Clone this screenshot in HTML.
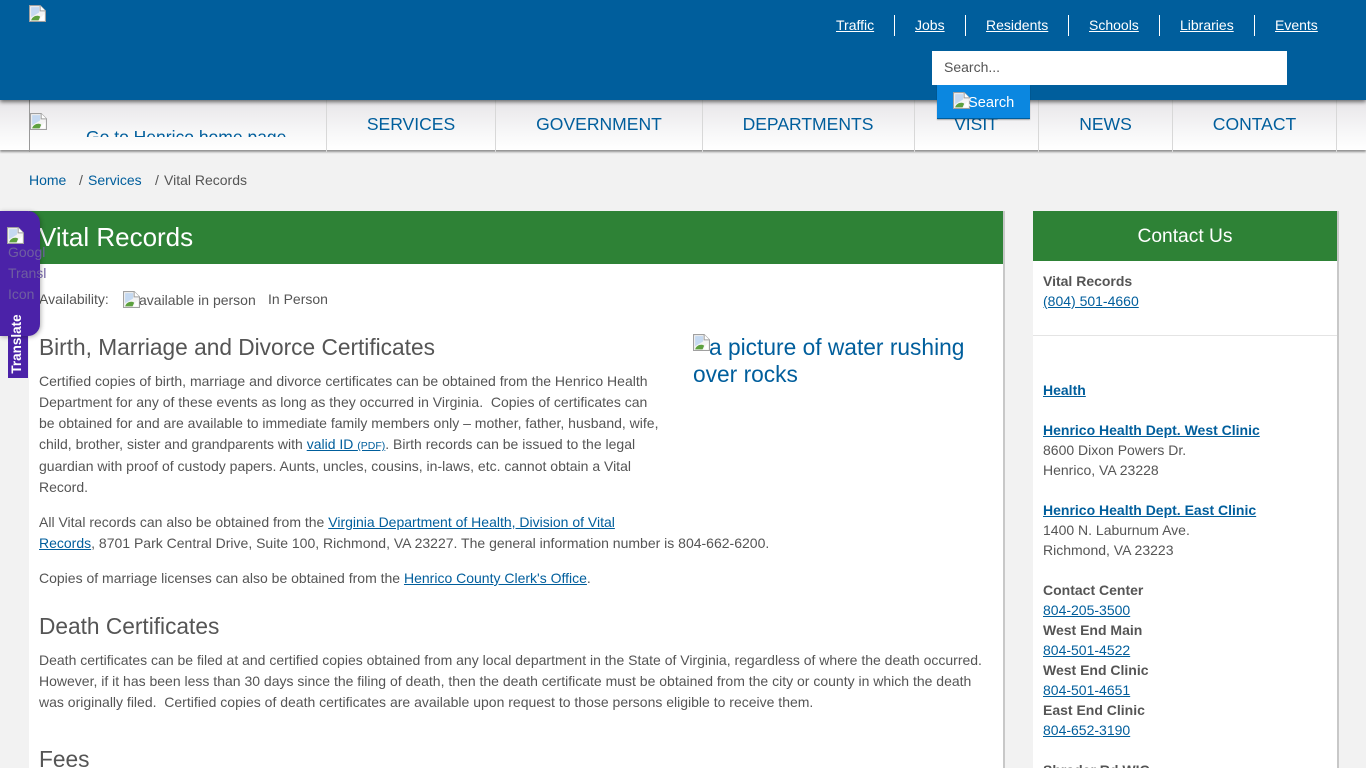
<!DOCTYPE html>
<html lang="en"><head><meta charset="utf-8"><title>Vital Records</title>
<style>
html,body{margin:0;padding:0;width:1366px;height:768px;overflow:hidden;background:#f2f2f2;font-family:"Liberation Sans",sans-serif;font-size:14px;color:#555}
#w{position:relative;width:1366px;height:768px;overflow:hidden}
a{color:#005e9c}
.t{position:absolute;white-space:nowrap;line-height:20px}
.b{font-weight:bold}
.h{position:absolute;white-space:nowrap;font-size:22.7px;line-height:30px;color:#555}
.top a{position:absolute;top:15px;line-height:20px;color:#fff;white-space:nowrap}
.sep{position:absolute;top:15px;width:1px;height:21px;background:#fff}
.nav{position:absolute;top:114px;line-height:20px;font-size:17.55px;color:#005e9c;white-space:nowrap;transform:translateX(-50%)}
.div{position:absolute;top:100px;height:52px;width:1px;background:#d8d8d8}
.ic{position:absolute;width:17px;height:17px}
</style></head><body><div id="w">
<svg width="0" height="0" style="position:absolute"><defs><symbol id="br" viewBox="0 0 16 16">
<path d="M.5 .5H10.500L15.500 5.500V15.500H.5Z" fill="#f4f4f4" stroke="#a0a0a0"/><path d="M10.500 .5V5.500H15.500" fill="#fff" stroke="#a0a0a0"/>
<path d="M2 2H9.500V7L2 11.500Z" fill="#c5d9f1"/><path d="M2 14.500C3 10.500 8 9 10.500 11L9 14.500Z" fill="#5da13f"/><path d="M11 12L14.500 8.500V14.500H10Z" fill="#fff"/>
</symbol></defs></svg>

<div style="position:absolute;left:0;top:0;width:1366px;height:100px;background:#005e9c;box-shadow:0 2px 4px rgba(0,0,0,.55);z-index:3"></div>
<div style="position:absolute;left:0;top:100px;width:1366px;height:50px;background:linear-gradient(#e7e5e8,#f6f6f7 60%,#fff);box-shadow:0 2px 2px rgba(0,0,0,.4);z-index:1"></div>
<div style="z-index:2;position:absolute;left:0;top:0;width:1366px;height:160px">
<div class="div" style="left:29px;background:#999"></div><div class="div" style="left:326px"></div><div class="div" style="left:495px"></div><div class="div" style="left:702px"></div><div class="div" style="left:914px"></div><div class="div" style="left:1038px"></div><div class="div" style="left:1172px"></div><div class="div" style="left:1336px"></div>
<svg class="ic" style="left:30px;top:113px"><use href="#br"/></svg>
<div style="position:absolute;left:86px;top:114px;height:23px;width:220px;overflow:hidden"><span style="position:absolute;left:0;top:13px;font-size:17.5px;line-height:20px;color:#005e9c;white-space:nowrap">Go to Henrico home page</span></div>
<span class="nav" style="left:411px">SERVICES</span><span class="nav" style="left:599px">GOVERNMENT</span><span class="nav" style="left:808px">DEPARTMENTS</span><span class="nav" style="left:976px">VISIT</span><span class="nav" style="left:1105.500px">NEWS</span><span class="nav" style="left:1254.500px">CONTACT</span>
</div>
<div class="top" style="position:absolute;left:0;top:0;width:1366px;height:100px;z-index:4">
<svg class="ic" style="left:29px;top:5px"><use href="#br"/></svg>
<a href="#" style="left:836px">Traffic</a><i class="sep" style="left:894px"></i>
<a href="#" style="left:915px">Jobs</a><i class="sep" style="left:965px"></i>
<a href="#" style="left:986px">Residents</a><i class="sep" style="left:1068px"></i>
<a href="#" style="left:1089px">Schools</a><i class="sep" style="left:1159px"></i>
<a href="#" style="left:1180px">Libraries</a><i class="sep" style="left:1254px"></i>
<a href="#" style="left:1275px">Events</a>
<div style="position:absolute;left:932px;top:51px;width:355px;height:34px;background:#fff;line-height:33px;text-indent:12px;color:#555">Search...</div>
</div>
<div style="position:absolute;left:937px;top:85px;width:93px;height:34px;background:#0b87e0;border-bottom:1px solid #005e9c;box-sizing:border-box;z-index:5;box-shadow:0 1px 1px rgba(0,0,0,.3)">
<svg class="ic" style="left:16px;top:7px"><use href="#br"/></svg><span style="position:absolute;left:31px;top:8px;line-height:20px;font-size:14.600px;color:#fff">Search</span></div>

<a class="t" href="#" style="left:29px;top:170px;text-decoration:none">Home</a>
<span class="t" style="left:79px;top:170px">/</span>
<a class="t" href="#" style="left:88px;top:170px;text-decoration:none">Services</a>
<span class="t" style="left:155px;top:170px">/</span>
<span class="t" style="left:164px;top:170px">Vital Records</span>

<div style="position:absolute;left:29px;top:211px;width:974px;height:557px;background:#fff;border-right:2px solid #c8c8c8"></div>
<div style="position:absolute;left:29px;top:211px;width:974px;height:53px;background:#2e8236"></div>
<div class="h" style="left:39px;top:222px;color:#fff;font-size:26px">Vital Records</div>
<span class="t" style="left:39px;top:289px">Availability:</span>
<svg class="ic" style="left:123px;top:291px"><use href="#br"/></svg>
<span class="t" style="left:139px;top:290px">available in person</span>
<span class="t" style="left:268px;top:289px">In Person</span>

<div class="h" style="left:39px;top:332px">Birth, Marriage and Divorce Certificates</div>
<svg class="ic" style="left:693px;top:334px"><use href="#br"/></svg>
<span class="t" style="left:709px;top:334px;font-size:22.75px;line-height:27px;color:#005e9c">a picture of water rushing</span>
<span class="t" style="left:693px;top:361px;font-size:22.75px;line-height:27px;color:#005e9c">over rocks</span>

<span class="t" style="left:39px;top:371px">Certified copies of birth, marriage and divorce certificates can be obtained from the Henrico Health</span>
<span class="t" style="left:39px;top:392px">Department for any of these events as long as they occurred in Virginia.&nbsp; Copies of certificates can</span>
<span class="t" style="left:39px;top:413px">be obtained for and are available to immediate family members only – mother, father, husband, wife,</span>
<span class="t" style="left:39px;top:434px">child, brother, sister and grandparents with <a href="#">valid ID <small style="font-size:10.500px">(PDF)</small></a>. Birth records can be issued to the legal</span>
<span class="t" style="left:39px;top:456px">guardian with proof of custody papers. Aunts, uncles, cousins, in-laws, etc. cannot obtain a Vital</span>
<span class="t" style="left:39px;top:477px">Record.</span>
<span class="t" style="left:39px;top:512px">All Vital records can also be obtained from the <a href="#">Virginia Department of Health, Division of Vital</a></span>
<span class="t" style="left:39px;top:533px"><a href="#">Records</a>, 8701 Park Central Drive, Suite 100, Richmond, VA 23227. The general information number is 804-662-6200.</span>
<span class="t" style="left:39px;top:568px">Copies of marriage licenses can also be obtained from the <a href="#">Henrico County Clerk's Office</a>.</span>
<div class="h" style="left:39px;top:611px">Death Certificates</div>
<span class="t" style="left:39px;top:650px">Death certificates can be filed at and certified copies obtained from any local department in the State of Virginia, regardless of where the death occurred.</span>
<span class="t" style="left:39px;top:671px">However, if it has been less than 30 days since the filing of death, then the death certificate must be obtained from the city or county in which the death</span>
<span class="t" style="left:39px;top:692px">was originally filed.&nbsp; Certified copies of death certificates are available upon request to those persons eligible to receive them.</span>
<div class="h" style="left:39px;top:744px">Fees</div>

<div style="position:absolute;left:1033px;top:211px;width:304px;height:557px;background:#fff;border-right:2px solid #c8c8c8"></div>
<div style="position:absolute;left:1033px;top:211px;width:304px;height:50px;background:#2e8236;color:#fff;font-size:19.200px;line-height:51px;text-align:center">Contact Us</div>
<div style="position:absolute;left:1033px;top:335px;width:304px;height:1px;background:#e4e4e4"></div>
<span class="t b" style="left:1043px;top:271px">Vital Records</span>
<a class="t" href="#" style="left:1043px;top:291px">(804) 501-4660</a>
<a class="t b" href="#" style="left:1043px;top:380px">Health</a>
<a class="t b" href="#" style="left:1043px;top:420px">Henrico Health Dept. West Clinic</a>
<span class="t" style="left:1043px;top:440px">8600 Dixon Powers Dr.</span>
<span class="t" style="left:1043px;top:460px">Henrico, VA 23228</span>
<a class="t b" href="#" style="left:1043px;top:500px">Henrico Health Dept. East Clinic</a>
<span class="t" style="left:1043px;top:520px">1400 N. Laburnum Ave.</span>
<span class="t" style="left:1043px;top:540px">Richmond, VA 23223</span>
<span class="t b" style="left:1043px;top:580px">Contact Center</span>
<a class="t" href="#" style="left:1043px;top:600px">804-205-3500</a>
<span class="t b" style="left:1043px;top:620px">West End Main</span>
<a class="t" href="#" style="left:1043px;top:640px">804-501-4522</a>
<span class="t b" style="left:1043px;top:660px">West End Clinic</span>
<a class="t" href="#" style="left:1043px;top:680px">804-501-4651</a>
<span class="t b" style="left:1043px;top:700px">East End Clinic</span>
<a class="t" href="#" style="left:1043px;top:720px">804-652-3190</a>
<span class="t b" style="left:1043px;top:760px">Shrader Rd WIC</span>

<div style="position:absolute;left:8px;top:300px;width:20px;height:78px;background:#4b22a8;z-index:6"></div>
<span style="position:absolute;z-index:8;left:17px;top:344px;transform:translate(-50%,-50%) rotate(-90deg);color:#fff;font-weight:bold;font-size:13.500px;line-height:20px;white-space:nowrap">Translate</span>
<div style="position:absolute;left:0;top:211px;width:40px;height:125px;background:#4b22a8;border-radius:0 12px 12px 0;box-shadow:1px 1px 5px rgba(0,0,0,.3);z-index:7"></div>
<svg class="ic" style="left:7px;top:227px;z-index:8"><use href="#br"/></svg>
<div style="position:absolute;left:8px;top:242px;width:38px;overflow:hidden;z-index:8;color:#6f5fa0;line-height:21px;white-space:nowrap">Google<br>Translate<br>Icon</div>
</div></body></html>
